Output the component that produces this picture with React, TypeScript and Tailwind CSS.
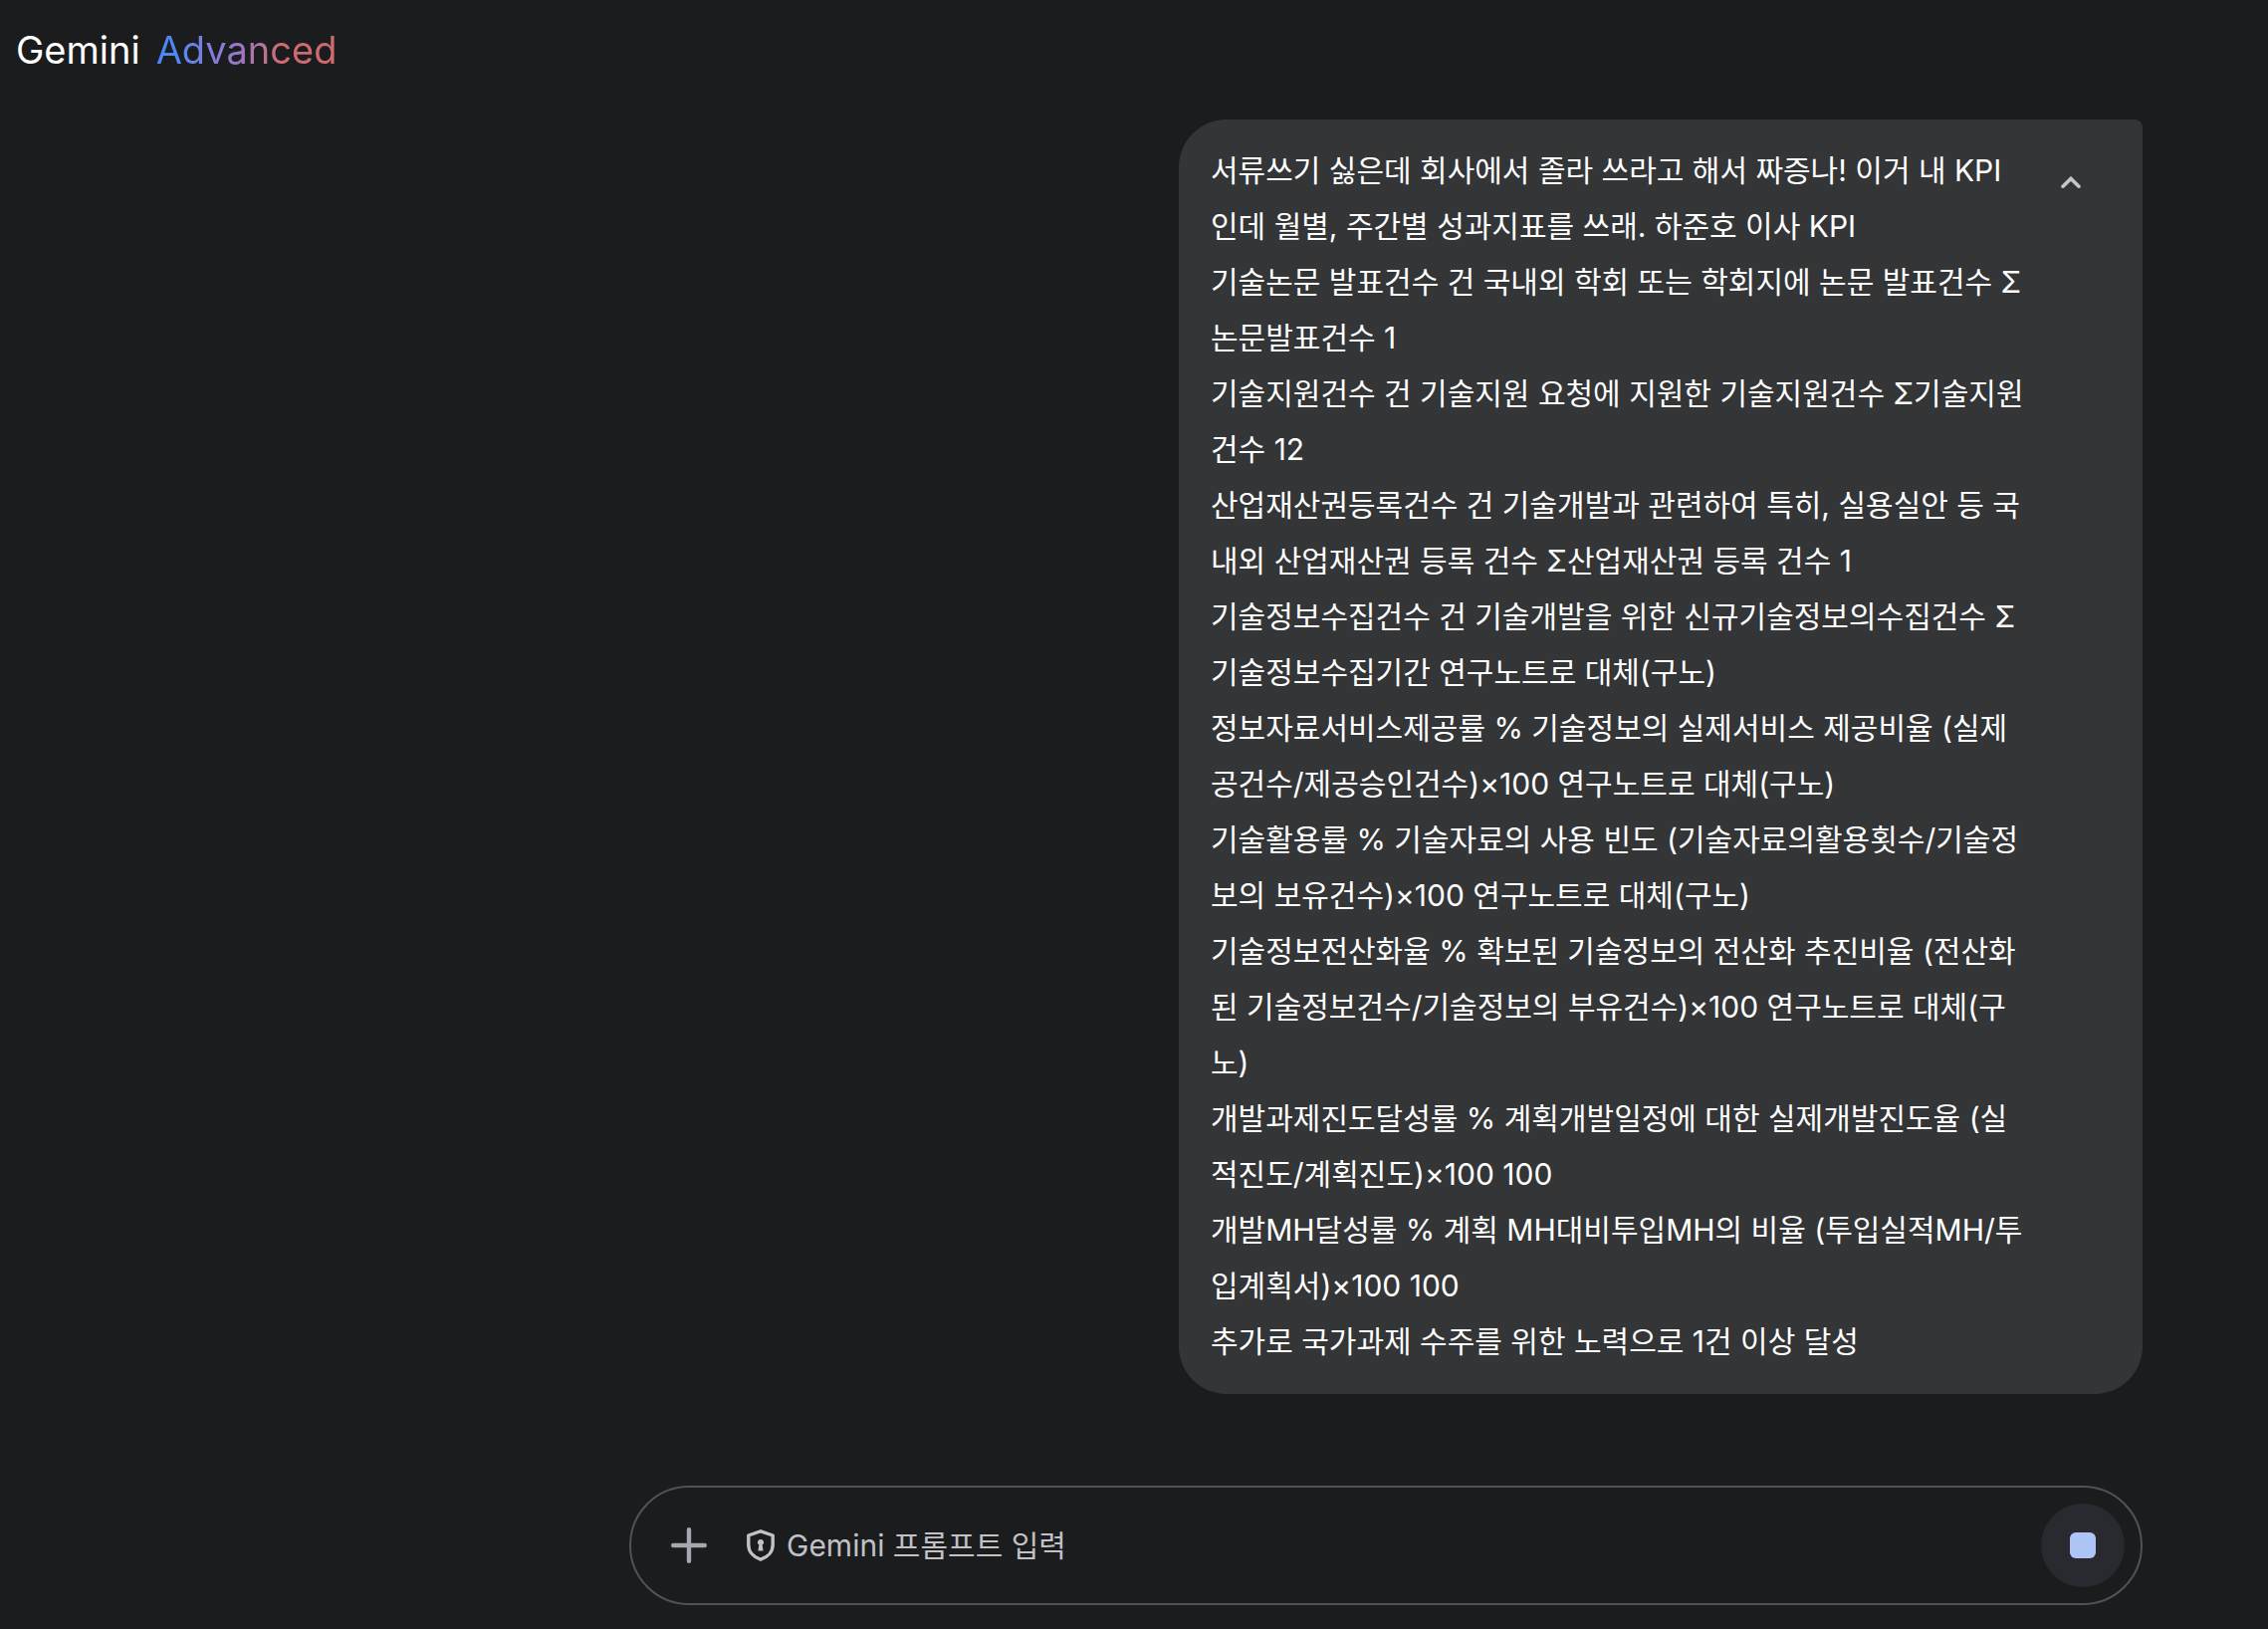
const prompt = [
  "서류쓰기 싫은데 회사에서 졸라 쓰라고 해서 짜증나! 이거 내 KPI인데 월별, 주간별 성과지표를 쓰래. 하준호 이사 KPI",
  "기술논문 발표건수 건 국내외 학회 또는 학회지에 논문 발표건수 Σ논문발표건수 1",
  "기술지원건수 건 기술지원 요청에 지원한 기술지원건수 Σ기술지원건수 12",
  "산업재산권등록건수 건 기술개발과 관련하여 특히, 실용실안 등 국내외 산업재산권 등록 건수 Σ산업재산권 등록 건수 1",
  "기술정보수집건수 건 기술개발을 위한 신규기술정보의수집건수 Σ기술정보수집기간 연구노트로 대체(구노)",
  "정보자료서비스제공률 % 기술정보의 실제서비스 제공비율 (실제공건수/제공승인건수)×100 연구노트로 대체(구노)",
  "기술활용률 % 기술자료의 사용 빈도 (기술자료의활용횟수/기술정보의 보유건수)×100 연구노트로 대체(구노)",
  "기술정보전산화율 % 확보된 기술정보의 전산화 추진비율 (전산화된 기술정보건수/기술정보의 부유건수)×100 연구노트로 대체(구노)",
  "개발과제진도달성률 % 계획개발일정에 대한 실제개발진도율 (실적진도/계획진도)×100 100",
  "개발MH달성률 % 계획 MH대비투입MH의 비율 (투입실적MH/투입계획서)×100 100",
  "추가로 국가과제 수주를 위한 노력으로 1건 이상 달성",
]

function Header() {
  return (
    <header className="flex h-[120px] items-start px-4 pt-6">
      <h1 className="flex gap-4 text-[38px] leading-[52px] text-white">
        <span>Gemini</span>
        <span className="bg-gradient-to-r from-[#4e86f5] from-10% via-[#9a76c8] via-45% to-[#cf6a70] to-70% bg-clip-text text-transparent">
          Advanced
        </span>
      </h1>
    </header>
  )
}

function UserMessage() {
  return (
    <article className="ml-auto flex w-full max-w-[968px] items-start justify-between rounded-[48px] rounded-tr-lg bg-[#333537] px-8 pt-[23px] pb-[25px]">
      <div className="max-w-[820px] flex-1 text-[30px] leading-[56px] text-white">
        {prompt.map((line) => (
          <p key={line}>{line}</p>
        ))}
      </div>
      <button
        type="button"
        aria-label="접기"
        className="flex h-20 w-20 items-center justify-center rounded-full text-[#c4c7c5]"
      >
        <svg width="20" height="12" viewBox="0 0 20 12" fill="none" stroke="currentColor" strokeWidth="3.6" strokeLinecap="round">
          <path d="M2 10.2 10 2.4l8 7.8" />
        </svg>
      </button>
    </article>
  )
}

function Composer() {
  return (
    <form className="flex h-[120px] items-center rounded-full border-2 border-[#4f5354] pl-10 pr-4">
      <button type="button" aria-label="파일 추가" className="p-0 text-[#a2a9b0]">
        <svg width="36" height="36" viewBox="0 0 36 36" fill="none" stroke="currentColor" strokeWidth="4.4" strokeLinecap="round">
          <path d="M18 2.2v31.6M2.2 18h31.6" />
        </svg>
      </button>
      <label htmlFor="prompt" aria-label="Gemini 프롬프트 입력" className="ml-10 text-[#c1c1c6]">
        <svg width="28" height="32" viewBox="0 0 28 32" fill="none">
          <path
            d="M14 1.8 26.200 6v9.500c0 6.800-4.800 12.300-12.200 14.700C6.600 27.800 1.800 22.300 1.800 15.500V6Z"
            stroke="currentColor"
            strokeWidth="3.4"
            strokeLinejoin="round"
          />
          <path d="M14 10a3 3 0 0 1 1.6 5.6l1 5.900h-5.200l1-5.900A3 3 0 0 1 14 10Z" fill="currentColor" />
        </svg>
      </label>
      <input
        id="prompt"
        type="text"
        placeholder="Gemini 프롬프트 입력"
        className="ml-3 h-14 min-w-0 flex-1 bg-transparent text-[30px] text-white outline-none placeholder:text-[#c1c1c6]"
      />
      <button
        type="button"
        aria-label="대답 생성 중지"
        className="flex h-[84px] w-[84px] items-center justify-center rounded-full bg-[#282a2f]"
      >
        <span className="h-[26px] w-[26px] rounded-md bg-[#aec6f6]" />
      </button>
    </form>
  )
}

export default function App() {
  return (
    <div className="flex min-h-screen flex-col bg-[#1b1c1d] font-['Inter','Noto_Sans_CJK_KR',sans-serif]" lang="ko">
      <Header />
      <main className="ml-auto mr-[126px] flex w-full max-w-[1520px] flex-1 flex-col justify-between pb-6">
        <UserMessage />
        <Composer />
      </main>
    </div>
  )
}
